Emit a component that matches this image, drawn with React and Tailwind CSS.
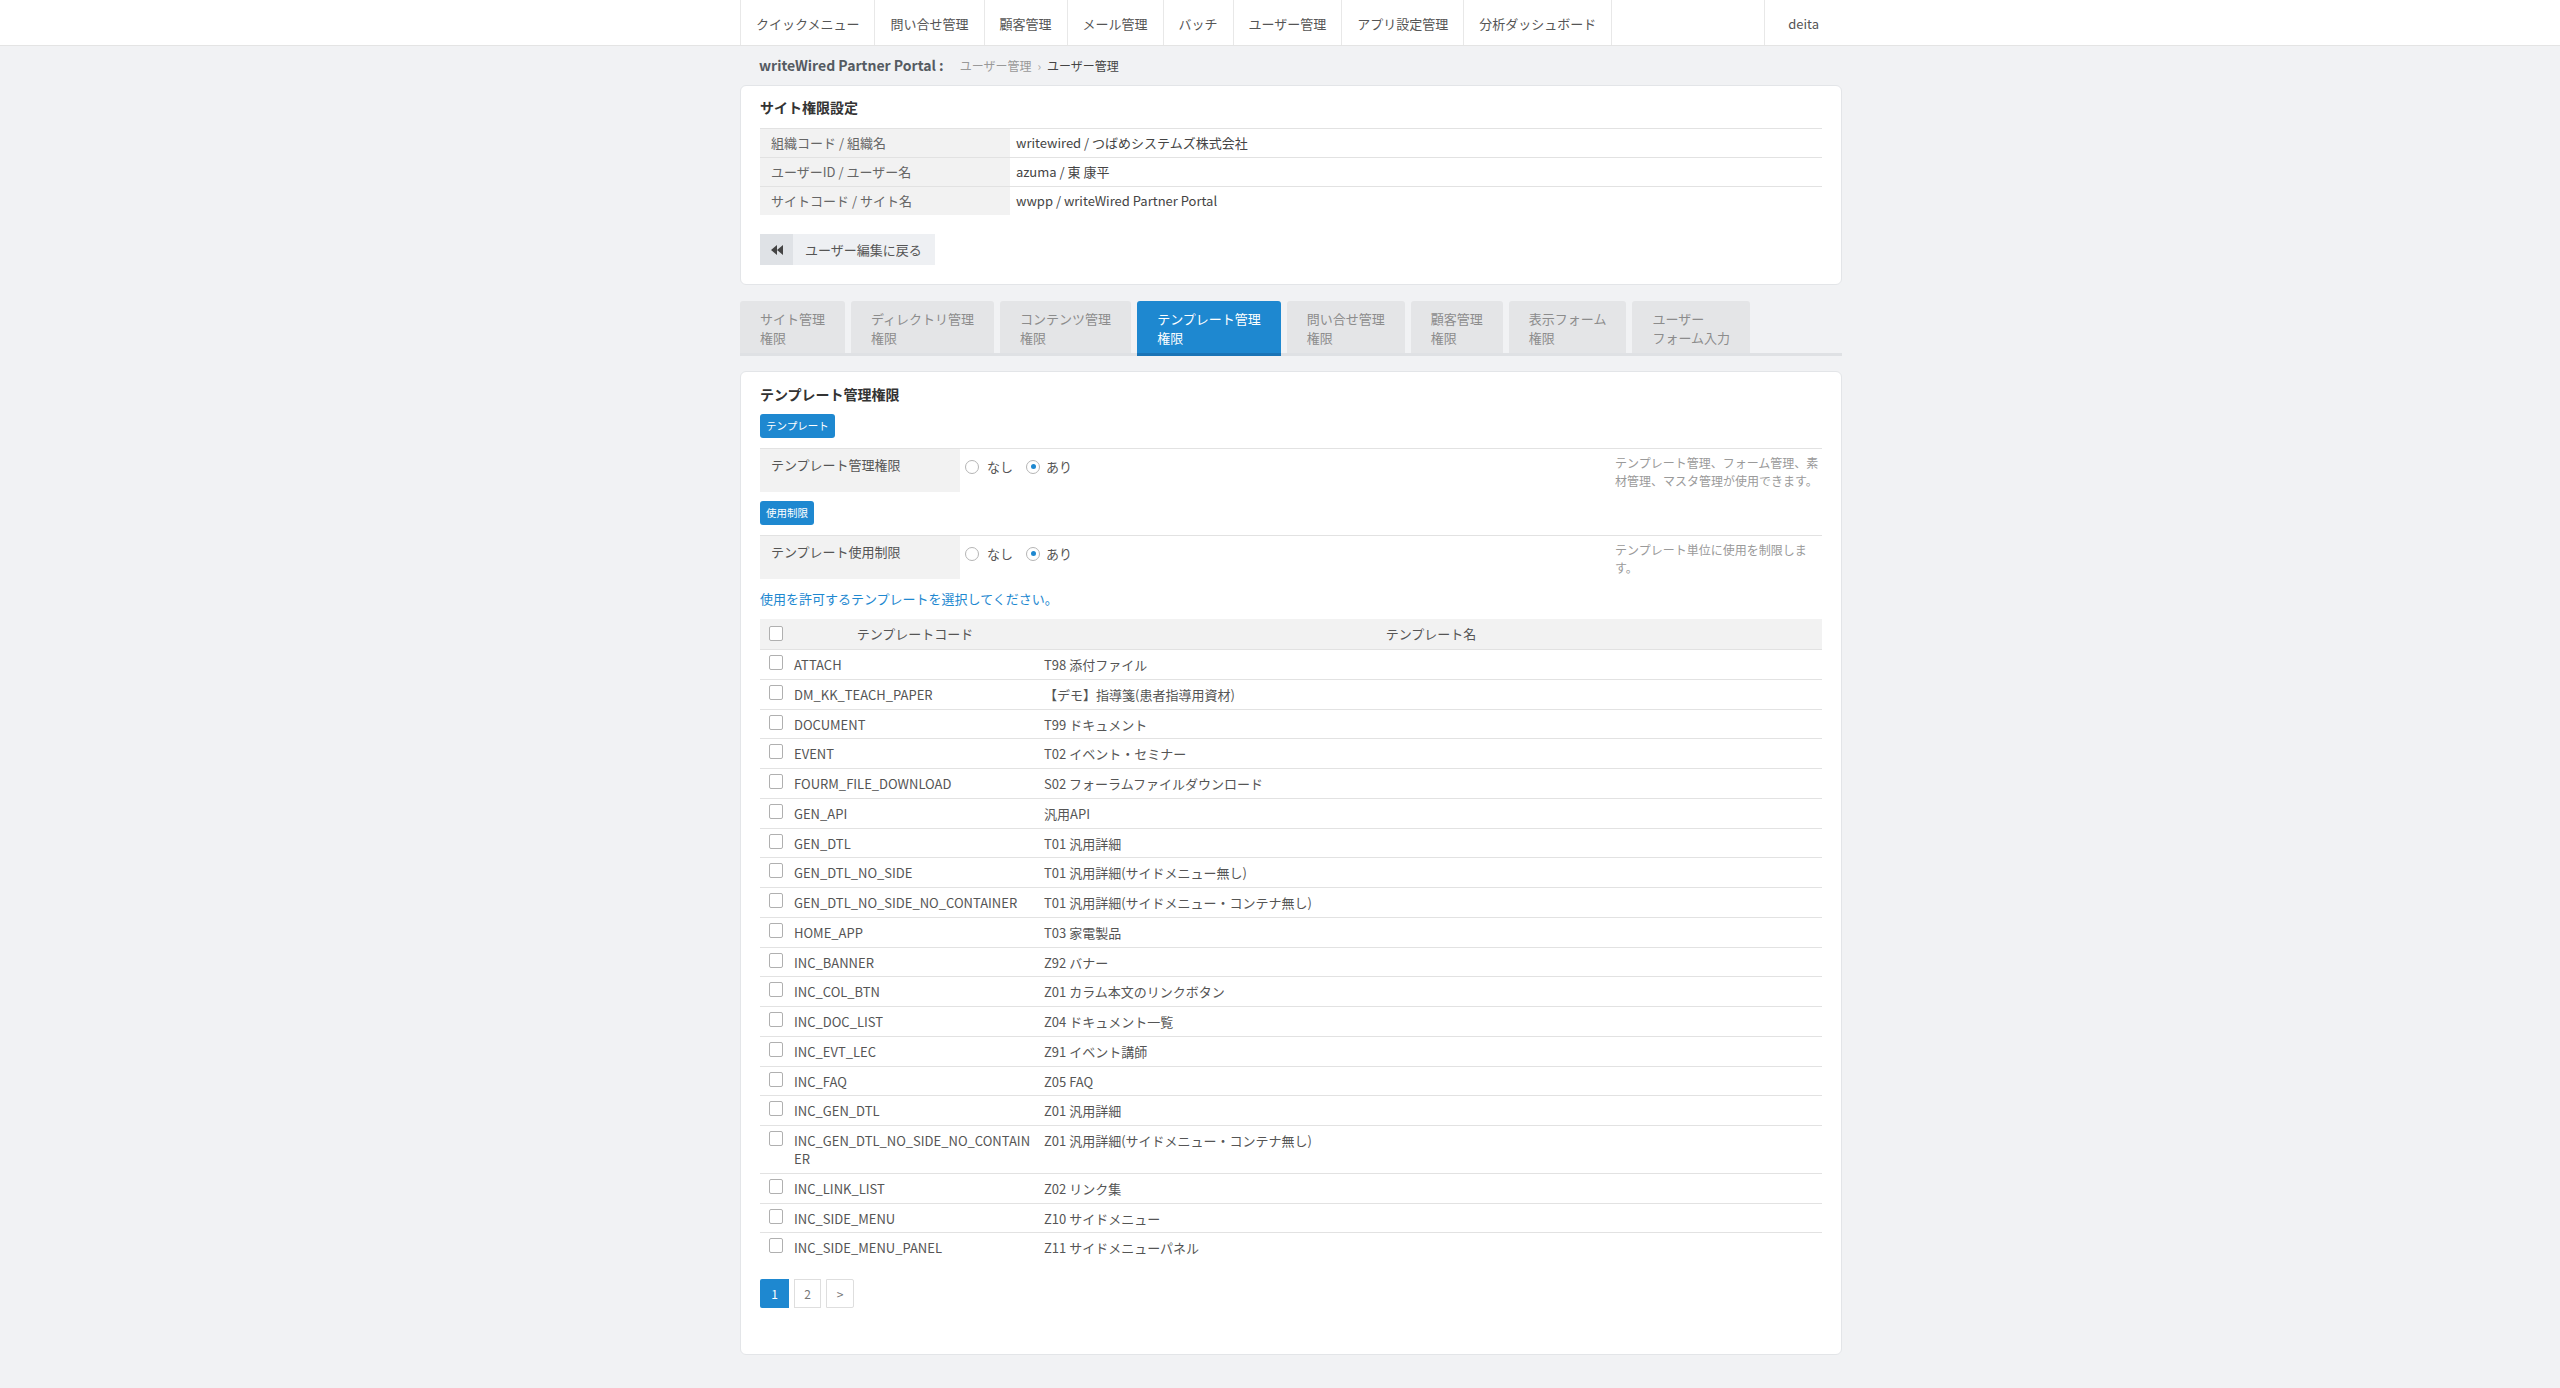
import React from 'react';

const menus = ['クイックメニュー', '問い合せ管理', '顧客管理', 'メール管理', 'バッチ', 'ユーザー管理', 'アプリ設定管理', '分析ダッシュボード'];

const tabs = [
  ['サイト管理', '権限'],
  ['ディレクトリ管理', '権限'],
  ['コンテンツ管理', '権限'],
  ['テンプレート管理', '権限'],
  ['問い合せ管理', '権限'],
  ['顧客管理', '権限'],
  ['表示フォーム', '権限'],
  ['ユーザー', 'フォーム入力'],
];

const templates = [
  ['ATTACH', 'T98 添付ファイル'],
  ['DM_KK_TEACH_PAPER', '【デモ】指導箋(患者指導用資材)'],
  ['DOCUMENT', 'T99 ドキュメント'],
  ['EVENT', 'T02 イベント・セミナー'],
  ['FOURM_FILE_DOWNLOAD', 'S02 フォーラムファイルダウンロード'],
  ['GEN_API', '汎用API'],
  ['GEN_DTL', 'T01 汎用詳細'],
  ['GEN_DTL_NO_SIDE', 'T01 汎用詳細(サイドメニュー無し)'],
  ['GEN_DTL_NO_SIDE_NO_CONTAINER', 'T01 汎用詳細(サイドメニュー・コンテナ無し)'],
  ['HOME_APP', 'T03 家電製品'],
  ['INC_BANNER', 'Z92 バナー'],
  ['INC_COL_BTN', 'Z01 カラム本文のリンクボタン'],
  ['INC_DOC_LIST', 'Z04 ドキュメント一覧'],
  ['INC_EVT_LEC', 'Z91 イベント講師'],
  ['INC_FAQ', 'Z05 FAQ'],
  ['INC_GEN_DTL', 'Z01 汎用詳細'],
  ['INC_GEN_DTL_NO_SIDE_NO_CONTAINER', 'Z01 汎用詳細(サイドメニュー・コンテナ無し)'],
  ['INC_LINK_LIST', 'Z02 リンク集'],
  ['INC_SIDE_MENU', 'Z10 サイドメニュー'],
  ['INC_SIDE_MENU_PANEL', 'Z11 サイドメニューパネル'],
];

function Radio({ checked }) {
  return (
    <span className="inline-flex items-center justify-center w-[14px] h-[14px] rounded-full border border-[#b5b5b5] bg-white">
      {checked && <span className="w-[5px] h-[5px] rounded-full bg-[#1e88d0]" />}
    </span>
  );
}

function Checkbox() {
  return <span className="block w-[14px] h-[15px] rounded-[2px] border border-[#b0b0b0] bg-white" />;
}

function PermRow({ label, desc }) {
  return (
    <div className="flex border-t border-[#e2e2e2] min-h-[44px]">
      <div className="w-[200px] bg-[#f2f2f2] pl-[11px] pt-[6px] leading-[19px] text-[13px] text-[#555]">{label}</div>
      <div className="flex-1 pl-[5px] pt-[8px]">
        <div className="flex items-center leading-[19px] text-[13px] text-[#555]">
          <Radio />
          <span className="ml-[8px] mr-[13px]">なし</span>
          <Radio checked />
          <span className="ml-[6px]">あり</span>
        </div>
      </div>
      <div className="w-[207px] pt-[5px] text-[12px] leading-[18px] text-[#9a9a9a]">{desc}</div>
    </div>
  );
}

function Badge({ children }) {
  return (
    <div className="w-fit h-[24px] leading-[24px] px-[6px] rounded-[3px] bg-[#1e88d0] text-white text-[10.5px]">
      {children}
    </div>
  );
}

export default function App() {
  return (
    <div className="min-h-screen bg-[#f1f2f4] pb-[34px] font-['Noto_Sans_CJK_JP',sans-serif]">
      <div className="bg-white border-b border-[#e4e4e4] h-[46px]">
        <div className="mx-auto w-[1124px] pl-[22px] flex h-full">
          {menus.map((m, i) => (
            <div
              key={m}
              className={`px-[15px] pt-[2px] leading-[43px] text-[13px] text-[#555] border-l border-[#e8e8e8] ${i === menus.length - 1 ? 'border-r' : ''}`}
            >
              {m}
            </div>
          ))}
          <div className="ml-auto px-[23px] pt-[2px] leading-[43px] text-[13px] text-[#555] border-l border-[#e8e8e8]">deita</div>
        </div>
      </div>

      <div className="mx-auto w-[1124px] pl-[22px]">
        <div className="h-[39px] flex items-center pl-[19px]">
          <span className="text-[14px] font-bold text-[#555b62]">writeWired Partner Portal :</span>
          <span className="ml-[16px] text-[12px] text-[#999]">ユーザー管理</span>
          <span className="mx-[6px] text-[12px] text-[#aaa]">›</span>
          <span className="text-[12px] text-[#444]">ユーザー管理</span>
        </div>

        <div className="bg-white border border-[#e3e5e8] rounded-[6px] px-[19px] pt-[11px] pb-[19px]">
          <div className="text-[14px] leading-[20px] font-bold text-[#333]">サイト権限設定</div>
          <div className="mt-[11px]">
            {[
              ['組織コード / 組織名', 'writewired / つばめシステムズ株式会社'],
              ['ユーザーID / ユーザー名', 'azuma / 東 康平'],
              ['サイトコード / サイト名', 'wwpp / writeWired Partner Portal'],
            ].map(([l, v]) => (
              <div key={l} className="flex border-t border-[#e2e2e2] h-[29px] text-[13px]">
                <div className="w-[250px] bg-[#f2f2f2] pl-[11px] flex items-center text-[#666]">{l}</div>
                <div className="pl-[6px] flex items-center text-[#444]">{v}</div>
              </div>
            ))}
          </div>
          <div className="mt-[19px] flex w-fit h-[31px] text-[13px] text-[#555]">
            <div className="w-[33px] bg-[#dfe2e6] flex items-center justify-center">
              <svg width="12" height="10" viewBox="0 0 12 10">
                <path d="M6 0 L0 5 L6 10 Z M12 0 L6 5 L12 10 Z" fill="#444" />
              </svg>
            </div>
            <div className="bg-[#eef0f3] pl-[12px] pr-[13px] flex items-center">ユーザー編集に戻る</div>
          </div>
        </div>

        <div className="mt-[16px] flex items-end gap-[6px] border-b-[3px] border-[#dfe1e4]">
          {tabs.map(([a, b], i) =>
            i === 3 ? (
              <div key={a} className="h-[55px] -mb-[3px] rounded-t-[3px] bg-[#1e88d0] border-b-[3px] border-[#1a74b6] px-[20px] pt-[8px] text-[13px] leading-[19px] text-white">
                {a}
                <br />
                {b}
              </div>
            ) : (
              <div key={a} className="h-[52px] rounded-t-[3px] bg-[#e4e5e7] px-[20px] pt-[8px] text-[13px] leading-[19px] text-[#8c8c8c]">
                {a}
                <br />
                {b}
              </div>
            )
          )}
        </div>

        <div className="mt-[15px] bg-white border border-[#e3e5e8] rounded-[6px] px-[19px] pt-[12px] pb-[46px]">
          <div className="text-[14px] leading-[20px] font-bold text-[#333]">テンプレート管理権限</div>
          <div className="mt-[10px]">
            <Badge>テンプレート</Badge>
          </div>
          <div className="mt-[10px]">
            <PermRow label="テンプレート管理権限" desc="テンプレート管理、フォーム管理、素材管理、マスタ管理が使用できます。" />
          </div>
          <div className="mt-[9px]">
            <Badge>使用制限</Badge>
          </div>
          <div className="mt-[10px]">
            <PermRow label="テンプレート使用制限" desc="テンプレート単位に使用を制限します。" />
          </div>
          <div className="mt-[10px] text-[13px] leading-[20px] text-[#1e88d0]">使用を許可するテンプレートを選択してください。</div>

          <div className="mt-[10px] text-[13px] text-[#555]">
            <div className="flex h-[30px] bg-[#f2f2f2]">
              <div className="w-[30px] pl-[9px] pt-[7px]">
                <Checkbox />
              </div>
              <div className="w-[250px] flex items-center justify-center">テンプレートコード</div>
              <div className="flex-1 flex items-center justify-center">テンプレート名</div>
            </div>
            {templates.map(([code, name]) => (
              <div key={code} className="flex border-t border-[#e2e2e2]">
                <div className="w-[30px] pl-[9px] pt-[5px]">
                  <Checkbox />
                </div>
                <div className="w-[250px] pl-[4px] pr-[8px] pt-[6px] pb-[4.75px] leading-[18px] break-all">{code}</div>
                <div className="flex-1 pl-[4px] pt-[6px] pb-[4.75px] leading-[18px]">{name}</div>
              </div>
            ))}
          </div>

          <div className="mt-[17px] flex gap-[5px] text-[12px]">
            <div className="w-[29px] h-[29px] flex items-center justify-center bg-[#1e88d0] text-white rounded-l-[2px]">1</div>
            <div className="w-[27px] h-[29px] flex items-center justify-center border border-[#dedede] text-[#777] bg-white">2</div>
            <div className="w-[28px] h-[29px] flex items-center justify-center border border-[#dedede] text-[#777] bg-white rounded-r-[2px]">&gt;</div>
          </div>
        </div>
      </div>
    </div>
  );
}
